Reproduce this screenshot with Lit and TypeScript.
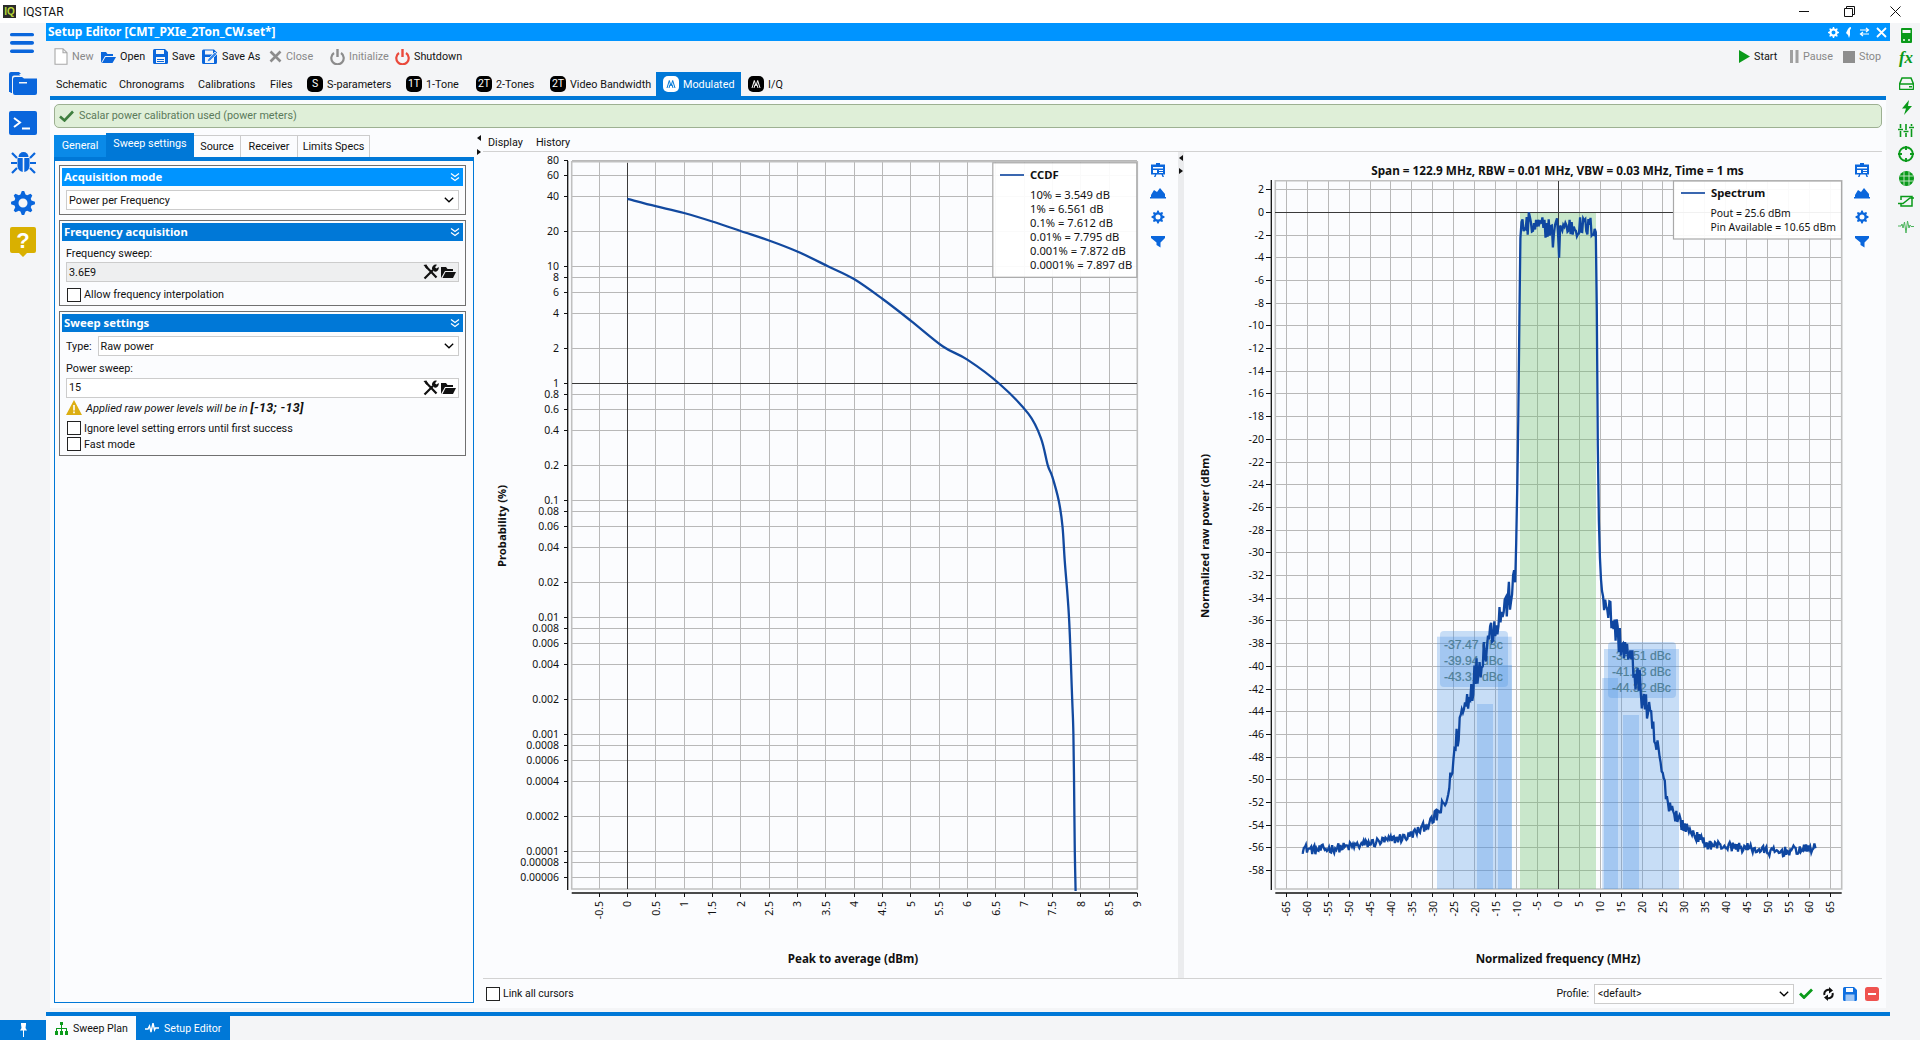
import { LitElement, html, css, svg } from "lit";
import { customElement } from "lit/decorators.js";

const BLUE = "#0a66dc";
const GREEN = "#0a9a1a";

function gearPath(cx: number, cy: number, R: number, r: number, hole: number, teeth = 8) {
  let d = "";
  const n = teeth * 4;
  for (let i = 0; i < n; i++) {
    const a = ((i - 0.5) / n) * Math.PI * 2;
    const rad = i % 4 < 2 ? R : r;
    d += `${i ? "L" : "M"}${(cx + rad * Math.cos(a)).toFixed(2)} ${(cy + rad * Math.sin(a)).toFixed(2)}`;
  }
  d += `Z M${cx - hole} ${cy}a${hole} ${hole} 0 1 0 ${hole * 2} 0a${hole} ${hole} 0 1 0 ${-hole * 2} 0Z`;
  return d;
}

const i = (w: number, h: number, body: unknown) =>
  html`<svg class="ic" width=${w} height=${h} viewBox="0 0 ${w} ${h}">${body}</svg>`;

const icons: Record<string, unknown> = {
  new: i(14, 17, svg`<path d="M1 .7h8l4 4v11.6H1z M9 .7v4h4" fill="#fff" stroke="#a8a8a8" stroke-width="1.1"/>`),
  open: i(16, 14, svg`<path d="M1 13V2h5l1.5 2H13v2H5L1 13z" fill=${BLUE}/><path d="M5.5 7H16l-3.5 6H2z" fill=${BLUE}/>`),
  save: i(15, 15, svg`<path fill-rule="evenodd" d="M0 1.5A1.5 1.5 0 0 1 1.5 0H12l3 3v10.5a1.5 1.5 0 0 1-1.5 1.5h-12A1.5 1.5 0 0 1 0 13.5zM3 1v4h8V1zM3 8v6h9V8z" fill=${BLUE}/><path d="M4 10h7v1H4zM4 12h7v1H4z" fill=${BLUE}/>`),
  saveas: i(16, 15, svg`<path fill-rule="evenodd" d="M0 2A1.5 1.5 0 0 1 1.5.5H12l3 3v10a1.5 1.5 0 0 1-1.5 1.5h-12A1.5 1.5 0 0 1 0 13.5zM3 1.5v4h8v-4zM3 8v6h9V8z" fill=${BLUE}/><path d="M5 13l1-3 7-7 2 2-7 7z" fill="#3d8ae8" stroke="#fff" stroke-width=".7"/>`),
  close: i(13, 13, svg`<path d="M1.5 1.5l10 10M11.5 1.5l-10 10" stroke="#8c8c8c" stroke-width="2.6"/>`),
  init: i(15, 16, svg`<path d="M4 4a6.2 6.2 0 1 0 7 0" fill="none" stroke="#8c8c8c" stroke-width="2.2"/><path d="M7.5 0v8" stroke="#8c8c8c" stroke-width="2.4"/>`),
  shut: i(15, 16, svg`<path d="M4 4a6.2 6.2 0 1 0 7 0" fill="none" stroke="#ea4a3c" stroke-width="2.2"/><path d="M7.5 0v8" stroke="#ea4a3c" stroke-width="2.4"/>`),
  start: i(11, 13, svg`<path d="M0 0l11 6.5L0 13z" fill=${GREEN}/>`),
  pause: i(9, 13, svg`<path d="M0 0h3v13H0zM5.5 0h3v13h-3z" fill="#a0a0a0"/>`),
  stop: i(12, 12, svg`<path d="M0 0h12v12H0z" fill="#8e8e8e"/>`),
};

const toolL = [
  { k: "new", t: "New", w: 46, off: true },
  { k: "open", t: "Open", w: 53 },
  { k: "save", t: "Save", w: 49 },
  { k: "saveas", t: "Save As", w: 67 },
  { k: "close", t: "Close", w: 61, off: true },
  { k: "init", t: "Initialize", w: 65, off: true },
  { k: "shut", t: "Shutdown", w: 70 },
];
const toolR = [
  { k: "start", t: "Start", w: 51 },
  { k: "pause", t: "Pause", w: 53, off: true },
  { k: "stop", t: "Stop", w: 39, off: true },
];

const mark = (c: string) =>
  svg`<path d="M4 12L6.300 4.500 8 10l1.700-5.500L12 12M6 12l1-3.500M10 12L9 8.500" fill="none" stroke=${c} stroke-width="1"/>`;

const tabs = [
  { t: "Schematic", w: 63 },
  { t: "Chronograms", w: 79 },
  { t: "Calibrations", w: 72 },
  { t: "Files", w: 37 },
  { t: "S-parameters", b: "S", w: 99 },
  { t: "1-Tone", b: "1T", w: 70 },
  { t: "2-Tones", b: "2T", w: 74 },
  { t: "Video Bandwidth", b: "2T", w: 106 },
  { t: "Modulated", m: true, active: true, w: 85 },
  { t: "I/Q", m: true, w: 60 },
];

const noise = (() => {
  let s = 12345;
  return () => {
    s = (s * 1664525 + 1013904223) >>> 0;
    return s / 4294967296;
  };
})();

function lerp(pts: number[][], x: number) {
  for (let k = 1; k < pts.length; k++) {
    if (x <= pts[k][0]) {
      const [a, b] = pts[k - 1];
      const [c, d] = pts[k];
      return b + ((d - b) * (x - a)) / (c - a);
    }
  }
  return pts[pts.length - 1][1];
}

const specPts = [
  [-61.3, -56], [-58, -56.2], [-50, -55.9], [-40, -55.3], [-36, -55], [-33, -54.4], [-30, -53.6], [-26.7, -52],
  [-25, -48.2], [-23.5, -44.7], [-21, -42], [-19, -40], [-16.3, -37], [-12.3, -34.5], [-10.2, -32.5], [-10, -28],
  [-9.6, -20], [-9.15, -4], [-9.05, -2.3], [-8.8, -1.3], [8.8, -1.3], [9.1, -2.2], [9.3, -15], [9.6, -26], [10, -31],
  [10.3, -33], [13.9, -37], [17.8, -40], [21.1, -43.6], [22.7, -46], [25, -49.7], [26.2, -52], [29.8, -54],
  [35.5, -55.7], [45, -56], [52, -56.4], [61.5, -56],
];

const X2 = (f: number) => 1558.3 + f * 4.185;
const Y2 = (v: number) => 212.3 - v * 11.35;
const X1 = (d: number) => 627.3 + d * 56.67;
const Y1 = (p: number) => 383.5 - Math.log10(p) * 117;

function spectrum() {
  const out: string[] = [];
  for (let f = -61.3; f <= 61.5; f += 0.25) {
    const a = Math.abs(f);
    const amp = a < 8.8 ? 0.95 : a < 10.4 ? 0 : a < 25 ? 1.5 : a < 30 ? 0.7 : 0.42;
    let v = lerp(specPts, f) + amp * (noise() * 2 - 1);
    if (Math.abs(f - 0.3) < 0.15) v = -4;
    if (Math.abs(f + 1.3) < 0.2) v = -3.1;
    if (Math.abs(f + 7) < 0.13) v = 0;
    out.push(`${X2(f).toFixed(1)},${Y2(Math.min(v, 0)).toFixed(1)}`);
  }
  return out.join(" ");
}

const P = (y: number) => Math.pow(10, (383.5 - y) / 117);
const ccdfPts = [
  [0, 37.8], [0.5, P(206.2)], [1, P(213)], [1.5, P(221.5)], [2, P(231)], [2.5, P(240.5)], [3, P(251.5)], [3.549, 10], [4, 7.8], [4.5, 5.3],
  [5, 3.45], [5.57, 2.07], [6, 1.6], [6.561, 1], [7.08, 0.55], [7.3, 0.34], [7.42, 0.2], [7.5, 0.16], [7.612, 0.1],
  [7.68, 0.06], [7.72, 0.03], [7.795, 0.01], [7.85, 0.002], [7.872, 0.001], [7.89, 0.0002], [7.897, 0.0001], [7.91, 0.000046],
];
const ccdfLine = (() => {
  const p = ccdfPts.map(([d, v]) => [X1(d), Y1(v)]);
  let d = `M${p[0][0].toFixed(1)} ${p[0][1].toFixed(1)}`;
  for (let k = 0; k < p.length - 1; k++) {
    const a = p[Math.max(k - 1, 0)];
    const b = p[k];
    const c = p[k + 1];
    const e = p[Math.min(k + 2, p.length - 1)];
    const c1x = b[0] + (c[0] - a[0]) / 6;
    const c1y = b[1] + (c[1] - a[1]) / 6;
    const c2x = c[0] - (e[0] - b[0]) / 6;
    const c2y = c[1] - (e[1] - b[1]) / 6;
    d += `C${c1x.toFixed(1)} ${c1y.toFixed(1)} ${c2x.toFixed(1)} ${c2y.toFixed(1)} ${c[0].toFixed(1)} ${c[1].toFixed(1)}`;
  }
  return d;
})();

const ylog = [80, 60, 40, 20, 10, 8, 6, 4, 2, 1, 0.8, 0.6, 0.4, 0.2, 0.1, 0.08, 0.06, 0.04, 0.02, 0.01, 0.008, 0.006, 0.004, 0.002, 0.001, 0.0008, 0.0006, 0.0004, 0.0002, 0.0001, 0.00008, 0.00006];
const x1t: number[] = [];
for (let d = -0.5; d <= 9; d += 0.5) x1t.push(d);
const y2t: number[] = [];
for (let v = 2; v >= -58; v -= 2) y2t.push(v);
const x2t: number[] = [];
for (let f = -65; f <= 65; f += 5) x2t.push(f);

const sideIcons = (x: number) => svg`
  <g transform="translate(${x - 8} 0)" fill=${BLUE}>
    <path fill-rule="evenodd" d="M6 163h4v1.500h5v10h-2l1 2.500h-1.500l-1-2.500h-5l-1 2.500H4l1-2.500H1v-10h5zM3 167v1.500h10V167zM3 170v3h4v-3zM9 170v1h4v-1zM9 172v1h4v-1z"/>
    <path d="M1 197l3-5 3 2 3-4 5 6v3H1zM0 199h16v1.500H0z" transform="translate(0 -2)"/>
    <path fill-rule="evenodd" d=${gearPath(8, 217, 6.5, 4.8, 2.5)}/>
    <path d="M1 236h14v2l-4.500 4.500v5L6.500 245v-2.500L1 238z"/>
  </g>`;

const legendLine = (x: number, y: number) => svg`<path d="M${x} ${y}h24" stroke="#2456a8" stroke-width="1.800"/>`;

const chart1 = () => svg`
  <svg class="chart" viewBox="483 152 697 826" width="697" height="826">
    <rect x="571.7" y="161.800" width="565.600" height="727.200" fill="#fbfcfe"/>
    ${ylog.map((p) => svg`<path class="g" d="M571.700 ${Y1(p).toFixed(1)}H1137.300"/>
      <path class="tk" d="M563.500 ${Y1(p).toFixed(1)}h4.500"/>
      <text class="t" x="559" y=${(Y1(p) + 3.5).toFixed(1)} text-anchor="end">${p}</text>`)}
    ${x1t.map((d) => svg`<path class="g" d="M${X1(d).toFixed(1)} 161.800V889"/>
      <path class="tk" d="M${X1(d).toFixed(1)} 893v3.500"/>
      <text class="t" transform="translate(${(X1(d) + 4).toFixed(1)} 901) rotate(-90)" text-anchor="end">${d}</text>`)}
    <path class="b" d="M571.700 889V161.800H1137.300V889Z"/>
    <path class="ax" d="M567.700 161v729M571.700 893H1137.300"/>
    <path class="c" d="M627.300 163V889M571.700 383.500H1137.300"/>
    <path d=${ccdfLine} fill="none" stroke="#12499f" stroke-width="2.300"/>
    <rect x="992.800" y="162.800" width="144" height="114.500" fill="#fff" fill-opacity=".93" stroke="#a9a9a9" stroke-width="1.200"/>
    ${legendLine(1000, 175)}
    <text class="h" x="1030" y="179">CCDF</text>
    ${["10% = 3.549 dB", "1% = 6.561 dB", "0.1% = 7.612 dB", "0.01% = 7.795 dB", "0.001% = 7.872 dB", "0.0001% = 7.897 dB"].map(
      (s, k) => svg`<text class="l" x="1030" y=${199 + k * 14}>${s}</text>`,
    )}
    ${sideIcons(1158)}
    <text class="h" transform="translate(506 526) rotate(-90)" text-anchor="middle">Probability (%)</text>
    <text class="h hx" x="853" y="963" text-anchor="middle">Peak to average (dBm)</text>
  </svg>`;

const dbc = (x: number, y: number, s: string) => svg`<text class="dbc" x=${x} y=${y}>${s}</text>`;

const chart2 = () => svg`
  <svg class="chart" viewBox="1186 152 696 826" width="696" height="826">
    ${y2t.map((v) => svg`<path class="g" d="M1275.300 ${Y2(v).toFixed(1)}H1841.700"/>
      <path class="tk" d="M1266 ${Y2(v).toFixed(1)}h5"/>
      <text class="t" x="1264" y=${(Y2(v) + 3.5).toFixed(1)} text-anchor="end">${v}</text>`)}
    ${x2t.map((f) => svg`<path class="g" d="M${X2(f).toFixed(1)} 180.700V889"/>
      <path class="tk" d="M${X2(f).toFixed(1)} 893v3.500"/>
      <text class="t" transform="translate(${(X2(f) + 4).toFixed(1)} 901) rotate(-90)" text-anchor="end">${f}</text>`)}
    <path class="b" d="M1275.300 889V180.700H1841.700V889Z"/>
    <rect x="1520" y="212.300" width="76" height="676.700" fill="#72c272" fill-opacity=".36"/>
    <g fill="#5096e6" fill-opacity=".3">
      <rect x="1437" y="636.700" width="74.700" height="252.300"/>
      <rect x="1477" y="704" width="16" height="185"/>
      <rect x="1498" y="665" width="14" height="224"/>
      <rect x="1604" y="649" width="75" height="240"/>
      <rect x="1602.300" y="678" width="15.700" height="211"/>
      <rect x="1623" y="715" width="16" height="174"/>
      <rect x="1440" y="631" width="68" height="56" rx="4"/>
      <rect x="1608" y="642" width="68" height="56" rx="4"/>
    </g>
    ${dbc(1444, 648.5, "-37.47 dBc")}${dbc(1444, 664.5, "-39.94 dBc")}${dbc(1444, 680.5, "-43.31 dBc")}
    ${dbc(1612, 659.5, "-38.51 dBc")}${dbc(1612, 675.5, "-41.63 dBc")}${dbc(1612, 691.5, "-44.32 dBc")}
    <path class="ax" d="M1271.300 180V890M1275.300 893H1841.700"/>
    <path class="c" d="M1558.300 181V889M1275.300 212.300H1841.700"/>
    <polyline points=${spectrum()} fill="none" stroke="#0f47a1" stroke-width="2.300"/>
    <rect x="1673.500" y="181" width="168" height="58" fill="#fff" fill-opacity=".93" stroke="#a9a9a9" stroke-width="1.200"/>
    ${legendLine(1681, 193)}
    <text class="h" x="1711" y="197">Spectrum</text>
    <text class="l l2" x="1710.500" y="217">Pout = 25.6 dBm</text>
    <text class="l l2" x="1710.500" y="231">Pin Available = 10.65 dBm</text>
    ${sideIcons(1862)}
    <text class="h ht" x="1557.500" y="175" text-anchor="middle">Span = 122.9 MHz, RBW = 0.01 MHz, VBW = 0.03 MHz, Time = 1 ms</text>
    <text class="h" transform="translate(1209 536) rotate(-90)" text-anchor="middle">Normalized raw power (dBm)</text>
    <text class="h hx" x="1558" y="963" text-anchor="middle">Normalized frequency (MHz)</text>
  </svg>`;

const chev = i(10, 10, svg`<path d="M1 1.500l4 3 4-3M1 5.500l4 3 4-3" fill="none" stroke="#fff" stroke-width="1.200"/>`);
const caret = i(10, 6, svg`<path d="M.8.8l4.200 4 4.200-4" fill="none" stroke="#000" stroke-width="1.300"/>`);
const tools = html`${i(16, 16, svg`<path d="M1.500 14.500L10 6M3 2.500l10.500 11" stroke="#111" stroke-width="2.200"/><path d="M14 .8a3.800 3.800 0 0 0-4.800 4.800l2.300 2a3.800 3.800 0 0 0 4.200-4.500l-2.200 1.400-1.500-1.200z" fill="#111"/><path d="M.5 1l3-.5 1.500 3-1.500 1.200z" fill="#111"/>`)}${i(
  15,
  12,
  svg`<path d="M0 12V1h5l1.500 2H12v2H4L0 12z" fill="#111"/><path d="M4.500 6H15l-3 6H1.500z" fill="#111"/>`,
)}`;

const railL = [
  i(24, 20, svg`<g fill=${BLUE}><rect y="0" width="24" height="3.300" rx="1.600"/><rect y="8" width="24" height="3.800" rx="1.800"/><rect y="16.500" width="24" height="3.500" rx="1.700"/></g>`),
  i(28, 24, svg`<path fill-rule="evenodd" d="M0 3a2 2 0 0 1 2-2h8l2 2H3v3h-.5L2 21h-2z M4 8a2 2 0 0 1 2-2h7l2 1.500H28V22a2 2 0 0 1-2 2H6a2 2 0 0 1-2-2z" fill=${BLUE}/><path d="M1.500 3H10l1.500 1.500H5a2 2 0 0 0-2 2V22H1.500z" fill=${BLUE}/><path d="M10 11h8v1.500h-8z" fill="#f4f5f7"/>`),
  i(28, 24, svg`<rect width="28" height="24" rx="2" fill=${BLUE}/><path d="M5 7l6 4.500-6 4.500" fill="none" stroke="#fff" stroke-width="2"/><path d="M13 16.500h8v2h-8z" fill="#fff"/>`),
  i(25, 24, svg`<g fill=${BLUE}><path d="M7.500 7a5 5 0 0 1 10 0z"/><path d="M6.500 8h5.200v14a6 6 0 0 1-5.200-6zM13.300 8h5.200v8a6 6 0 0 1-5.200 6z"/></g><path d="M1 3l5 5M24 3l-5 5M0 13h6M25 13h-6M1 23l5-5M24 23l-5-5" stroke=${BLUE} stroke-width="2.200"/>`),
  i(24, 24, svg`<path fill-rule="evenodd" d=${gearPath(12, 12, 12, 8.8, 4.5)} fill=${BLUE}/>`),
  i(26, 30, svg`<path d="M2 0h22a2 2 0 0 1 2 2v22a2 2 0 0 1-2 2h-7l-4 4-4-4H2a2 2 0 0 1-2-2V2a2 2 0 0 1 2-2z" fill="#d9b000"/><text x="13" y="21" text-anchor="middle" class="q">?</text>`),
];

const railR = [
  i(11, 15, svg`<path fill-rule="evenodd" d="M1 0h9a1 1 0 0 1 1 1v13a1 1 0 0 1-1 1H1a1 1 0 0 1-1-1V1a1 1 0 0 1 1-1zM1.500 2v3h8V2z" fill=${GREEN}/><path d="M2 11h2v2H2zM7 11h2v2H7z" fill="#bde5bd"/>`),
  html`<span class="fx">fx</span>`,
  i(15, 13, svg`<path d="M3 1h9l2.500 6v4.500a1 1 0 0 1-1 1h-12a1 1 0 0 1-1-1V7zM1 7h13" fill="none" stroke=${GREEN} stroke-width="1.500"/><path d="M10 9h3v1.500h-3z" fill=${GREEN}/>`),
  i(11, 15, svg`<path d="M8 0L1 8.500h4L3 15l8-9H7z" fill=${GREEN}/>`),
  i(16, 13, svg`<path d="M2.500 0v4M2.500 7v6M8 0v6M8 9v4M13.500 0v2M13.500 5v8M0 5.500h5M5.500 7.500h5M11 3.500h5" stroke=${GREEN} stroke-width="1.600"/>`),
  i(16, 16, svg`<circle cx="8" cy="8" r="6.800" fill="none" stroke=${GREEN} stroke-width="1.900"/><path d="M8 0v4M8 12v4M0 8h4M12 8h4" stroke=${GREEN} stroke-width="1.900"/>`),
  i(15, 15, svg`<circle cx="7.500" cy="7.500" r="7.500" fill=${GREEN}/><path d="M5 .5v14M10 .5v14M.5 5h14M.5 10h14" stroke="#cfe9cf" stroke-width=".9"/>`),
  i(16, 13, svg`<path d="M3 5V1.500h11V11H3V8.500" fill="none" stroke=${GREEN} stroke-width="1.500"/><path d="M0 8.500h5l7-5.500h4" fill="none" stroke=${GREEN} stroke-width="1.500"/>`),
  i(16, 15, svg`<path d="M0 8h3l1-2 1 4 1.500-6L8 15l1.500-12L11 10l1-3 1 1.500h3" fill="none" stroke="#4cb45c" stroke-width="1"/>`),
];

@customElement("app-root")
export class AppRoot extends LitElement {
  static styles = css`
    :host { display: block; width: 1920px; height: 1040px; overflow: hidden; background: #f4f5f7; font: 10.8px Roboto, sans-serif; color: #111; }
    .ic { display: block; flex: none; }
    .title { height: 23px; background: #fff; display: flex; align-items: center; padding-left: 3px; font-size: 12px; gap: 7px; }
    .logo { width: 13px; height: 13px; background: #2a2a2a; color: #b9d737; font: bold 10px/13px "Liberation Sans", sans-serif; text-align: center; }
    .win { margin-left: auto; display: flex; align-items: center; padding-right: 19px; }
    .win svg { margin-left: 35px; }
    .row { display: flex; height: 1017px; }
    .rail { width: 46px; flex: none; display: flex; flex-direction: column; align-items: center; padding-top: 10px; box-sizing: border-box; }
    .rail .ic:nth-child(1) { margin-bottom: 18px; margin-right: 2px; }
    .rail .ic:nth-child(2) { margin-bottom: 16px; }
    .rail .ic:nth-child(3) { margin-bottom: 15px; }
    .rail .ic:nth-child(4) { margin-bottom: 17px; }
    .rail .ic:nth-child(5) { margin-bottom: 12px; }
    .q { font: bold 22px "Liberation Sans", sans-serif; fill: #fff; }
    .pin { margin-top: auto; width: 46px; height: 20px; background: #0078d7; display: flex; align-items: center; justify-content: center; }
    .rail .pin .ic { margin: 0; }
    .main { width: 1844px; flex: none; display: flex; flex-direction: column; }
    .hdr { height: 18px; background: #0094ff; color: #fff; font: bold 12px/18px "Noto Sans", sans-serif; padding-left: 2px; display: flex; align-items: center; }
    .hbtn { margin-left: auto; display: flex; gap: 6px; padding-right: 3px; align-items: center; }
    .tool { height: 31px; display: flex; align-items: center; padding: 0 8px; box-sizing: border-box; }
    .ti { display: flex; align-items: center; gap: 4px; flex: none; white-space: nowrap; }
    .off { color: #888; }
    .rt { margin-left: auto; display: flex; }
    .tabs { height: 28px; box-sizing: border-box; display: flex; margin: 0 4px; padding-left: 6px; border-bottom: 4px solid #0078d7; }
    .tab { display: flex; align-items: center; gap: 4px; flex: none; white-space: nowrap; }
    .tab.on { background: #0078d7; color: #fff; padding-left: 7px; box-sizing: border-box; margin-right: 7px; }
    .badge { width: 16px; height: 16px; border-radius: 5px; background: #000; color: #fff; font-size: 10.5px; line-height: 16px; text-align: center; flex: none; display: block; }
    .on .badge { background: #fff; }
    .body { margin: 0 4px; height: 908px; background: #fbfcfe; padding: 4px 4px 0; box-sizing: border-box; display: flex; flex-direction: column; }
    .alert { height: 24px; flex: none; box-sizing: border-box; border: 1px solid #9db092; border-radius: 5px; background: #dfefd8; color: #5b7a5b; display: flex; align-items: center; padding: 0 0 1px 4px; gap: 5px; }
    .work { display: flex; flex: 1; min-height: 0; }
    .left { width: 420px; flex: none; padding-top: 5px; display: flex; flex-direction: column; }
    .ltabs { height: 24px; display: flex; align-items: flex-end; }
    .lt { height: 22px; box-sizing: border-box; border: 1px solid #ccc; border-bottom: 0; border-left: 0; line-height: 21px; text-align: center; flex: none; }
    .lt.g { background: #0a8ae8; color: #fff; border: 0; }
    .lt.s { height: 24px; line-height: 22px; background: #0078d7; color: #fff; border: 0; }
    .panel { height: 846px; box-sizing: border-box; border: 1px solid #0078d7; border-top-width: 4px; padding: 4px 7px 0 4px; display: flex; flex-direction: column; gap: 5px; }
    .grp { border: 1.3px solid #707070; padding: 2px 2px 3px; box-sizing: border-box; }
    .grp.first { padding-bottom: 3.5px; }
    .gh { height: 18px; background: #0078d7; color: #fff; font: bold 11.3px/18px "Noto Sans", sans-serif; padding: 0 3px 0 2px; display: flex; align-items: center; justify-content: space-between; }
    .gh.lite { background: #0094ff; }
    .fld { height: 20px; box-sizing: border-box; border: 1px solid #ccc; background: #fff; margin: 4px 4px 0; display: flex; align-items: center; justify-content: space-between; padding: 0 4px 0 2px; }
    .fld.ro { background: #eeeff0; }
    .fld.in { padding: 0 2px 0 2px; }
    .acts { display: flex; gap: 2px; align-items: center; }
    .lbl { margin: 6px 4px 0; height: 13.5px; line-height: 13.5px; }
    .lbl + .fld { margin-top: 2px; }
    .tr { display: flex; align-items: center; margin: 4px 4px 0; gap: 6px; }
    .tr .fld { flex: 1; margin: 0; }
    .cb { display: flex; align-items: center; gap: 3px; margin: 1px 5px 0; height: 15px; }
    .cb.top { margin-top: 5px; }
    .box { width: 12px; height: 12px; border: 1px solid #222; background: #fff; flex: none; display: block; }
    .warn { display: flex; align-items: center; gap: 4px; margin: 1px 4px 5px; height: 17px; font-style: italic; font-size: 11px; }
    .warn b { font-weight: 700; font-size: 12.5px; letter-spacing: .3px; }
    .mid { width: 9px; flex: none; display: flex; flex-direction: column; align-items: flex-start; padding: 7px 0 0 3px; box-sizing: border-box; gap: 8px; }
    .right { flex: 1; padding-top: 5px; display: flex; flex-direction: column; min-width: 0; }
    .rtabs { height: 19px; box-sizing: border-box; border-bottom: 1.3px solid #d2d2d2; display: flex; gap: 13px; padding-left: 5px; align-items: center; }
    .charts { display: flex; height: 826px; }
    .chart { display: block; flex: none; }
    .split { width: 6px; flex: none; margin: 0 2px 0 -2px; background: #ebecee; display: flex; flex-direction: column; gap: 7px; padding-top: 3px; align-items: center; box-sizing: border-box; }
    .foot { height: 30px; box-sizing: border-box; border-top: 1.3px solid #d2d2d2; display: flex; align-items: center; padding-left: 3px; gap: 3px; font-size: 10.5px; }
    .prof { margin-left: auto; display: flex; align-items: center; gap: 5px; }
    .combo { width: 200px; height: 20px; box-sizing: border-box; border: 1px solid #ccc; background: #fff; display: flex; align-items: center; justify-content: space-between; padding: 0 4px 0 3px; }
    .pacts { display: flex; align-items: center; gap: 8px; padding-right: 3px; }
    .pacts .ic:nth-child(2) { margin: 0 1px 0 2px; }
    .bar { height: 4px; background: #0078d7; margin-top: 4px; flex: none; }
    .bot { height: 24px; display: flex; flex: none; font-size: 10.6px; }
    .bt { display: flex; align-items: center; gap: 5px; padding-left: 9px; box-sizing: border-box; flex: none; }
    .bt.a { width: 90px; background: #fbfcfe; }
    .bt.b { width: 94px; background: #0078d7; color: #fff; }
    .rr { width: 30px; flex: none; display: flex; flex-direction: column; align-items: center; padding: 5px 0 0 2px; box-sizing: border-box; gap: 9.2px; }
    .fx { font: italic bold 17px/16px "Liberation Serif", serif; color: #0a9a1a; height: 16px; margin: -2px 0 2px; }
    .chart text { font-family: "Noto Sans", sans-serif; }
    .chart .t { font-size: 10.5px; fill: #111; }
    .chart .l { font-size: 11.2px; fill: #111; }
    .chart .l2 { font-size: 10.4px; }
    .chart .h { font-size: 11.3px; font-weight: 700; fill: #111; }
    .chart .ht { font-size: 11.75px; }
    .chart .hx { font-size: 11.6px; }
    .chart .dbc { font: 12.2px "Liberation Sans", sans-serif; fill: #4f8098; stroke: #4f8098; stroke-width: .2; }
    .g { stroke: #b8b8b8; stroke-width: 1; fill: none; shape-rendering: crispEdges; }
    .b { stroke: #c0c0c0; stroke-width: 1.6; fill: none; }
    .tk { stroke: #111; stroke-width: 1; shape-rendering: crispEdges; }
    .ax { stroke: #111; stroke-width: 1.3; fill: none; }
    .c { stroke: #3a3a3a; stroke-width: 1; fill: none; shape-rendering: crispEdges; }
  `;

  renderTool(t: { k: string; t: string; w: number; off?: boolean }) {
    return html`<div class="ti ${t.off ? "off" : ""}" style="width:${t.w}px">${icons[t.k]}<span>${t.t}</span></div>`;
  }

  render() {
    const white = "#fff";
    return html`
      <div class="title">
        <span class="logo">IQ</span><span>IQSTAR</span>
        <div class="win">
          ${i(10, 2, svg`<path d="M0 .5h10" stroke="#111"/>`)}
          ${i(11, 11, svg`<path d="M.5 2.500h8v8h-8zM2.500 2.500v-2h8v8h-2" fill="none" stroke="#111"/>`)}
          ${i(11, 11, svg`<path d="M.5.5l10 10M10.500.5l-10 10" stroke="#111"/>`)}
        </div>
      </div>
      <div class="row">
        <div class="rail">
          ${railL}
          <div class="pin">${i(7, 14, svg`<path d="M1 0h5v1.500L5.500 5 7 7.500H4v6.500H3V7.500H0L1.500 5 1 1.500z" fill=${white}/>`)}</div>
        </div>
        <div class="main">
          <div class="hdr">
            <span>Setup Editor [CMT_PXIe_2Ton_CW.set*]</span>
            <div class="hbtn">
              ${i(11, 11, svg`<path fill-rule="evenodd" d=${gearPath(5.5, 5.5, 5.5, 4, 2)} fill=${white}/>`)}
              ${i(8, 11, svg`<path d="M3 2a4 4 0 0 1 3-2v1.500L5 3v5L4 11 3 8 1 6z" fill=${white}/>`)}
              ${i(11, 10, svg`<path d="M1 3h8M7 1l2.500 2L7 5M10 7H2M4 5L1.500 7 4 9" fill="none" stroke=${white} stroke-width="1.200"/>`)}
              ${i(11, 11, svg`<path d="M1 1l9 9M10 1l-9 9" stroke=${white} stroke-width="1.800"/>`)}
            </div>
          </div>
          <div class="tool">
            ${toolL.map((t) => this.renderTool(t))}
            <div class="rt">${toolR.map((t) => this.renderTool(t))}</div>
          </div>
          <div class="tabs">
            ${tabs.map(
              (t) => html`<div class="tab ${t.active ? "on" : ""}" style="width:${t.w}px">
                ${t.b ? html`<span class="badge">${t.b}</span>` : ""}
                ${t.m ? html`<svg class="badge" viewBox="0 0 16 16">${mark(t.active ? "#0078d7" : "#fff")}</svg>` : ""}
                <span>${t.t}</span>
              </div>`,
            )}
          </div>
          <div class="body">
            <div class="alert">
              ${i(15, 12, svg`<path d="M1 6.500l4.500 4L14 1.500" fill="none" stroke="#3f7f3f" stroke-width="2.600"/>`)}
              <span>Scalar power calibration used (power meters)</span>
            </div>
            <div class="work">
              <div class="left">
                <div class="ltabs">
                  ${[
                    ["General", 52, "g"],
                    ["Sweep settings", 88, "s"],
                    ["Source", 47, ""],
                    ["Receiver", 57, ""],
                    ["Limits Specs", 72, ""],
                  ].map((t) => html`<div class="lt ${t[2]}" style="width:${t[1]}px">${t[0]}</div>`)}
                </div>
                <div class="panel">
                  <div class="grp first">
                    <div class="gh lite"><span>Acquisition mode</span>${chev}</div>
                    <div class="fld"><span>Power per Frequency</span>${caret}</div>
                  </div>
                  <div class="grp">
                    <div class="gh"><span>Frequency acquisition</span>${chev}</div>
                    <div class="lbl">Frequency sweep:</div>
                    <div class="fld ro in"><span>3.6E9</span><div class="acts">${tools}</div></div>
                    <div class="cb top"><span class="box"></span><span>Allow frequency interpolation</span></div>
                  </div>
                  <div class="grp">
                    <div class="gh"><span>Sweep settings</span>${chev}</div>
                    <div class="tr"><span>Type:</span><div class="fld"><span>Raw power</span>${caret}</div></div>
                    <div class="lbl">Power sweep:</div>
                    <div class="fld in"><span>15</span><div class="acts">${tools}</div></div>
                    <div class="warn">
                      ${i(16, 15, svg`<path d="M8 0l8 15H0z" fill="#dcae12"/><path d="M7.200 5h1.600v5.500H7.200zM7.200 11.500h1.600v1.700H7.200z" fill="#fff"/>`)}
                      <span>Applied raw power levels will be in <b>[-13; -13]</b></span>
                    </div>
                    <div class="cb"><span class="box"></span><span>Ignore level setting errors until first success</span></div>
                    <div class="cb"><span class="box"></span><span>Fast mode</span></div>
                  </div>
                </div>
              </div>
              <div class="mid">
                ${i(4, 6, svg`<path d="M4 0v6L0 3z" fill="#111"/>`)}
                ${i(4, 6, svg`<path d="M0 0v6l4-3z" fill="#111"/>`)}
              </div>
              <div class="right">
                <div class="rtabs"><span>Display</span><span>History</span></div>
                <div class="charts">
                  ${chart1()}
                  <div class="split">
                    ${i(4, 6, svg`<path d="M4 0v6L0 3z" fill="#111"/>`)}
                    ${i(4, 6, svg`<path d="M0 0v6l4-3z" fill="#111"/>`)}
                  </div>
                  ${chart2()}
                </div>
                <div class="foot">
                  <span class="box"></span><span>Link all cursors</span>
                  <div class="prof">
                    <span>Profile:</span>
                    <div class="combo"><span>&lt;default&gt;</span>${caret}</div>
                    <div class="pacts">
                      ${i(14, 11, svg`<path d="M1 5.500l4 4L13 1.500" fill="none" stroke=${GREEN} stroke-width="2.800"/>`)}
                      ${i(11, 14, svg`<path d="M1.500 8a4 4 0 0 1 6-4.500M9.500 6a4 4 0 0 1-6 4.500" fill="none" stroke="#111" stroke-width="2"/><path d="M6 0v6.500l4-3zM5 14V7.500l-4 3z" fill="#111"/>`)}
                      ${i(14, 14, svg`<path fill-rule="evenodd" d="M0 1.500A1.500 1.500 0 0 1 1.500 0H11l3 3v9.500a1.500 1.500 0 0 1-1.500 1.500h-11A1.500 1.500 0 0 1 0 12.500zM3 1v4h7V1z" fill="#0f6fe0"/><path d="M2.500 7.500h9V14h-9z" fill="#9fc6f5"/>`)}
                      ${i(14, 14, svg`<rect width="14" height="14" rx="2.500" fill="#ef5350"/><path d="M3 6h8v2H3z" fill="#fff"/>`)}
                    </div>
                  </div>
                </div>
              </div>
            </div>
          </div>
          <div class="bar"></div>
          <div class="bot">
            <div class="bt a">${i(13, 13, svg`<path d="M5 0h3v3H5zM6 3h1v3H6zM1 6h11v3h-1V7H7v2H6V7H2v2H1zM0 9h3v4H0zM5 9h3v4H5zM10 9h3v4h-3z" fill=${GREEN}/>`)}<span>Sweep Plan</span></div>
            <div class="bt b">${i(14, 11, svg`<path d="M0 6h3l1.500-3L6 9l2-9 1.500 7 1-2H14" fill="none" stroke=${white} stroke-width="1.400"/>`)}<span>Setup Editor</span></div>
          </div>
        </div>
        <div class="rr">${railR}</div>
      </div>
    `;
  }
}
